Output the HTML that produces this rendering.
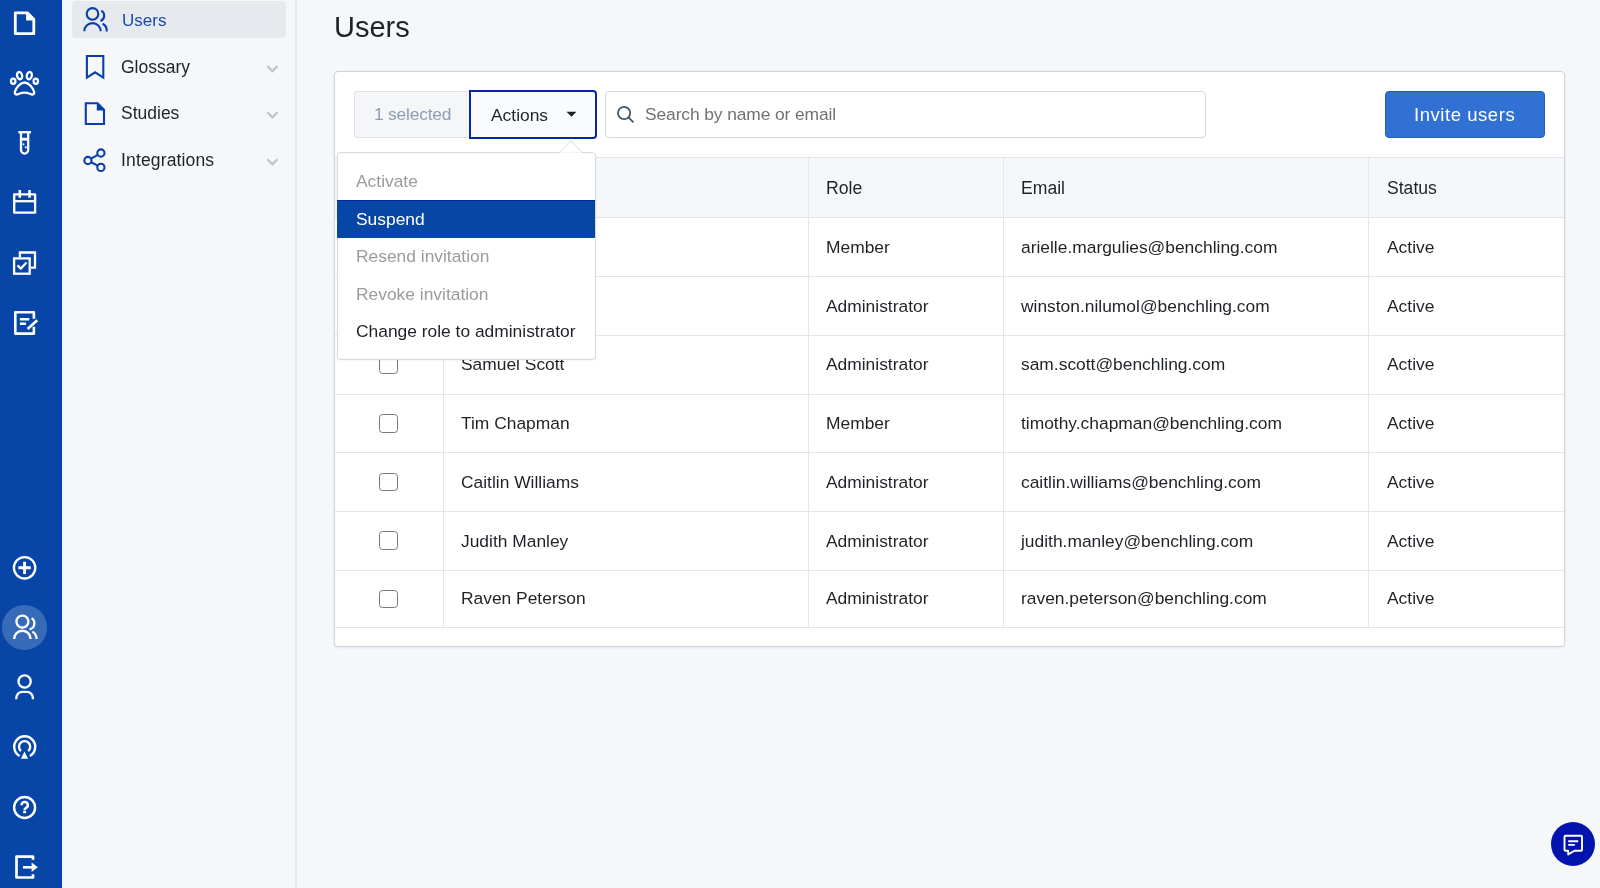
<!DOCTYPE html>
<html><head><meta charset="utf-8"><style>
*{box-sizing:border-box;margin:0;padding:0}
html,body{width:1600px;height:888px;overflow:hidden;background:#f6f7f9;font-family:"Liberation Sans",sans-serif;color:#1f2226}
.a{position:absolute}
.t{position:absolute;white-space:nowrap;line-height:1;will-change:transform}
svg{position:absolute;overflow:visible}
</style></head><body>
<div class="a" style="left:0;top:0;width:62px;height:888px;background:#0746a6"></div>
<div class="a" style="left:61px;top:0;width:1px;height:888px;background:#0141a2"></div>
<div class="a" style="left:2.3px;top:605px;width:44.6px;height:44.6px;border-radius:50%;background:rgba(255,255,255,0.2)"></div>

<svg style="left:0;top:0" width="62" height="888" viewBox="0 0 62 888">
 <!-- doc -->
 <path d="M15.3 12.8 H27.3 L33.8 19.3 V33.7 H15.3 Z" fill="none" stroke="#fff" stroke-width="2.8" stroke-linejoin="round"/>
 <path d="M26.1 11.5 L35.1 20.5 H26.1 Z" fill="#fff"/>
 <!-- paw -->
 <g fill="none" stroke="#fff" stroke-width="2.3" stroke-width="2.1">
  <ellipse cx="19.6" cy="75.6" rx="2.5" ry="3.7" transform="rotate(-15 19.6 75.6)"/>
  <ellipse cx="29.3" cy="75.6" rx="2.5" ry="3.7" transform="rotate(15 29.3 75.6)"/>
  <ellipse cx="13.2" cy="81.3" rx="2.2" ry="2.6"/>
  <ellipse cx="35.8" cy="81.3" rx="2.2" ry="2.6"/>
  <path d="M24.5 82.5 C20 82.5 16 88 15 91.5 C14.2 94.5 16.5 95 18.5 94 C21 93 23 92.6 24.5 92.6 C26 92.6 28 93 30.5 94 C32.5 95 34.8 94.5 34 91.5 C33 88 29 82.5 24.5 82.5 Z"/>
 </g>
 <!-- test tube -->
 <g fill="none" stroke="#fff" stroke-width="2.3">
  <path d="M18.3 132.2 H31"/>
  <path d="M21 132.2 V150 A3.6 3.6 0 0 0 28.2 150 V132.2"/>
  <path d="M21 139.2 H28.2" stroke-width="2.8"/>
 </g>
 <circle cx="23.5" cy="144.2" r="1" fill="#fff"/>
 <circle cx="25.8" cy="147.3" r="1.1" fill="#fff"/>
 <!-- calendar -->
 <g fill="none" stroke="#fff" stroke-width="2.3">
  <rect x="14.2" y="194.3" width="20.9" height="18.4" stroke-linejoin="round"/>
  <path d="M14.2 201.2 H35.1"/>
  <path d="M19.8 190 V197.7 M29.5 190 V197.7" stroke-width="2.5"/>
 </g>
 <!-- checkbox stack -->
 <g fill="none" stroke="#fff" stroke-width="2.3">
  <path d="M19.9 257.3 V252.5 H35 V267.6 H30.7"/>
  <rect x="14.1" y="258.4" width="15.6" height="15.3"/>
  <path d="M17.5 265.3 L20.8 268.5 L26.5 262.5"/>
 </g>
 <!-- edit doc -->
 <g fill="none" stroke="#fff" stroke-width="2.3">
  <path d="M33.9 318.8 V312.3 H15.3 V333.6 H33.9 V326.7" stroke-width="2.6" stroke-linejoin="round"/>
  <path d="M19.9 319.2 H29.3 M19.9 323.8 H26" stroke-width="2.5"/>
  <path d="M27.6 328.9 L37.2 320.3" stroke-width="2.7"/>
 </g>
 <!-- plus circle -->
 <g fill="none" stroke="#fff" stroke-width="2.3">
  <circle cx="24.6" cy="567.8" r="10.7"/>
  <path d="M24.6 561.7 V574 M18.4 567.8 H30.8" stroke-width="2.9"/>
 </g>
 <!-- users (active) -->
 <g fill="none" stroke="#fff" stroke-width="2.3">
  <circle cx="22.4" cy="621.6" r="6"/>
  <path d="M14.1 639 A8.25 8.25 0 0 1 30.6 639"/>
  <path d="M31.6 618.1 A6.2 6.2 0 0 1 29.6 629.3"/>
  <path d="M32.4 631.6 A9 9 0 0 1 36.6 639"/>
 </g>
 <!-- person -->
 <g fill="none" stroke="#fff" stroke-width="2.3">
  <circle cx="24.6" cy="681.5" r="6.1"/>
  <path d="M16.3 699.2 V698 A6.2 6.2 0 0 1 22.5 691.8 H26.7 A6.2 6.2 0 0 1 32.9 698 V699.2"/>
 </g>
 <!-- airplay -->
 <g fill="none" stroke="#fff" stroke-width="2.3">
  <path d="M19.6 756 A10.5 10.5 0 1 1 29.8 756" stroke-width="2.4"/>
  <path d="M21 751 A5.6 5.6 0 1 1 28.2 751" stroke-width="2.4"/>
 </g>
 <path d="M24.5 751.6 L28.1 758.7 H20.9 Z" fill="#fff"/>
 <!-- help -->
 <g fill="none" stroke="#fff" stroke-width="2.3">
  <circle cx="24.6" cy="807.5" r="10.5" stroke-width="2.4"/>
  <path d="M21.6 805.2 A3.1 3.1 0 1 1 25.8 808 C24.9 808.5 24.6 808.9 24.6 810.2" stroke-width="2.5"/>
 </g>
 <rect x="23.2" y="810.9" width="2.9" height="2.3" fill="#fff"/>
 <!-- logout -->
 <g fill="none" stroke="#fff" stroke-width="2.3">
  <path d="M33 859.7 V856.6 H16.5 V877.5 H33 V874.2" stroke-width="2.7" stroke-linejoin="round"/>
  <path d="M23 867.3 H33" stroke-width="2.6"/>
 </g>
 <path d="M31.6 862.5 L37.8 867.3 L31.6 872.1 Z" fill="#fff"/>
</svg>
<div class="a" style="left:295px;top:0;width:2px;height:888px;background:#e4e7eb"></div>
<div class="a" style="left:72px;top:1px;width:214px;height:37px;background:#e6e9ed;border-radius:4px"></div>

<svg style="left:0;top:0" width="300" height="200" viewBox="0 0 300 200">
 <g fill="none" stroke="#0a3ea8" stroke-width="2.1">
  <circle cx="92.5" cy="13.9" r="5.8"/>
  <path d="M84.3 31.3 A8.2 8.2 0 0 1 100.7 31.3"/>
  <path d="M101.3 10.6 A5.8 5.8 0 0 1 100.5 21"/>
  <path d="M102.6 23.8 A7.5 7.5 0 0 1 106.6 31.5"/>
  <path d="M86.9 56 H103.3 V77.6 L95.1 72.3 L86.9 77.6 Z" stroke-linejoin="miter"/>
  <path d="M85.8 103.2 H97.5 L104 109.7 V124 H85.8 Z"/>
  <circle cx="87.9" cy="160.5" r="3.6"/>
  <circle cx="100.9" cy="153" r="3.6"/>
  <circle cx="100.9" cy="167.4" r="3.6"/>
  <path d="M91 158.7 L97.8 154.8 M91 162.3 L97.8 165.6"/>
 </g>
 <path d="M96.8 102.2 L105 110.4 H96.8 Z" fill="#0a3ea8"/>
 <g fill="none" stroke="#bcc5ce" stroke-width="2.3">
  <path d="M267.4 66 L272.4 71.2 L277.4 66"/>
  <path d="M267.4 112.2 L272.4 117.4 L277.4 112.2"/>
  <path d="M267.4 159.2 L272.4 164.4 L277.4 159.2"/>
 </g>
</svg>
<div class="t" style="left:121.50px;top:12.00px;font-size:17px;color:#1a4aa8;">Users</div>
<div class="t" style="left:121.40px;top:59.00px;font-size:17.5px;color:#1f2226;">Glossary</div>
<div class="t" style="left:121.40px;top:105.00px;font-size:17.5px;color:#1f2226;">Studies</div>
<div class="t" style="left:121.40px;top:152.00px;font-size:17.5px;color:#1f2226;letter-spacing:0.15px">Integrations</div>
<div class="t" style="left:334.20px;top:13.00px;font-size:29px;color:#1f2226;">Users</div>
<div class="a" style="left:334px;top:71px;width:1231px;height:576px;background:#fff;border:1px solid #cdd3db;border-radius:4px;box-shadow:0 1px 3px rgba(30,40,60,0.08)"></div>
<div class="a" style="left:335px;top:157px;width:1229px;height:61px;background:#f6f7f9;border-top:1px solid #e1e4e8;border-bottom:1px solid #e1e4e8"></div>
<div class="a" style="left:335px;top:276px;width:1229px;height:1px;background:#e3e6ea"></div>
<div class="a" style="left:335px;top:335px;width:1229px;height:1px;background:#e3e6ea"></div>
<div class="a" style="left:335px;top:394px;width:1229px;height:1px;background:#e3e6ea"></div>
<div class="a" style="left:335px;top:452px;width:1229px;height:1px;background:#e3e6ea"></div>
<div class="a" style="left:335px;top:511px;width:1229px;height:1px;background:#e3e6ea"></div>
<div class="a" style="left:335px;top:570px;width:1229px;height:1px;background:#e3e6ea"></div>
<div class="a" style="left:335px;top:627px;width:1229px;height:1px;background:#e3e6ea"></div>
<div class="a" style="left:442.8px;top:157px;width:1px;height:470px;background:#e3e6ea"></div>
<div class="a" style="left:808.3px;top:157px;width:1px;height:470px;background:#e3e6ea"></div>
<div class="a" style="left:1003.0px;top:157px;width:1px;height:470px;background:#e3e6ea"></div>
<div class="a" style="left:1368.3px;top:157px;width:1px;height:470px;background:#e3e6ea"></div>
<div class="t" style="left:826.00px;top:180.00px;font-size:17.6px;color:#1f2226;">Role</div>
<div class="t" style="left:1020.80px;top:180.00px;font-size:17.6px;color:#1f2226;">Email</div>
<div class="t" style="left:1386.80px;top:180.00px;font-size:17.6px;color:#1f2226;">Status</div>
<div class="t" style="left:460.80px;top:180.00px;font-size:17.6px;color:#1f2226;">Name</div>
<div class="a" style="left:379.4px;top:238.38px;width:18.6px;height:18.6px;border:1.4px solid #787878;border-radius:3.5px;background:#fff"></div>
<div class="t" style="left:460.80px;top:239.00px;font-size:17.4px;color:#1f2226;">Arielle Margulies</div>
<div class="t" style="left:826.00px;top:239.00px;font-size:17.4px;color:#1f2226;">Member</div>
<div class="t" style="left:1021.00px;top:239.00px;font-size:17.4px;color:#1f2226;">arielle.margulies@benchling.com</div>
<div class="t" style="left:1386.80px;top:239.00px;font-size:17.4px;color:#1f2226;">Active</div>
<div class="a" style="left:379.4px;top:296.95px;width:18.6px;height:18.6px;border:1.4px solid #787878;border-radius:3.5px;background:#fff"></div>
<div class="t" style="left:460.80px;top:298.00px;font-size:17.4px;color:#1f2226;">Winston Nilumol</div>
<div class="t" style="left:826.00px;top:298.00px;font-size:17.4px;color:#1f2226;">Administrator</div>
<div class="t" style="left:1021.00px;top:298.00px;font-size:17.4px;color:#1f2226;">winston.nilumol@benchling.com</div>
<div class="t" style="left:1386.80px;top:298.00px;font-size:17.4px;color:#1f2226;">Active</div>
<div class="a" style="left:379.4px;top:355.52px;width:18.6px;height:18.6px;border:1.4px solid #787878;border-radius:3.5px;background:#fff"></div>
<div class="t" style="left:460.80px;top:356.00px;font-size:17.4px;color:#1f2226;">Samuel Scott</div>
<div class="t" style="left:826.00px;top:356.00px;font-size:17.4px;color:#1f2226;">Administrator</div>
<div class="t" style="left:1021.00px;top:356.00px;font-size:17.4px;color:#1f2226;">sam.scott@benchling.com</div>
<div class="t" style="left:1386.80px;top:356.00px;font-size:17.4px;color:#1f2226;">Active</div>
<div class="a" style="left:379.4px;top:414.09px;width:18.6px;height:18.6px;border:1.4px solid #787878;border-radius:3.5px;background:#fff"></div>
<div class="t" style="left:460.80px;top:415.00px;font-size:17.4px;color:#1f2226;">Tim Chapman</div>
<div class="t" style="left:826.00px;top:415.00px;font-size:17.4px;color:#1f2226;">Member</div>
<div class="t" style="left:1021.00px;top:415.00px;font-size:17.4px;color:#1f2226;">timothy.chapman@benchling.com</div>
<div class="t" style="left:1386.80px;top:415.00px;font-size:17.4px;color:#1f2226;">Active</div>
<div class="a" style="left:379.4px;top:472.66px;width:18.6px;height:18.6px;border:1.4px solid #787878;border-radius:3.5px;background:#fff"></div>
<div class="t" style="left:460.80px;top:474.00px;font-size:17.4px;color:#1f2226;">Caitlin Williams</div>
<div class="t" style="left:826.00px;top:474.00px;font-size:17.4px;color:#1f2226;">Administrator</div>
<div class="t" style="left:1021.00px;top:474.00px;font-size:17.4px;color:#1f2226;">caitlin.williams@benchling.com</div>
<div class="t" style="left:1386.80px;top:474.00px;font-size:17.4px;color:#1f2226;">Active</div>
<div class="a" style="left:379.4px;top:531.24px;width:18.6px;height:18.6px;border:1.4px solid #787878;border-radius:3.5px;background:#fff"></div>
<div class="t" style="left:460.80px;top:533.00px;font-size:17.4px;color:#1f2226;">Judith Manley</div>
<div class="t" style="left:826.00px;top:533.00px;font-size:17.4px;color:#1f2226;">Administrator</div>
<div class="t" style="left:1021.00px;top:533.00px;font-size:17.4px;color:#1f2226;">judith.manley@benchling.com</div>
<div class="t" style="left:1386.80px;top:533.00px;font-size:17.4px;color:#1f2226;">Active</div>
<div class="a" style="left:379.4px;top:589.80px;width:18.6px;height:18.6px;border:1.4px solid #787878;border-radius:3.5px;background:#fff"></div>
<div class="t" style="left:460.80px;top:590.00px;font-size:17.4px;color:#1f2226;">Raven Peterson</div>
<div class="t" style="left:826.00px;top:590.00px;font-size:17.4px;color:#1f2226;">Administrator</div>
<div class="t" style="left:1021.00px;top:590.00px;font-size:17.4px;color:#1f2226;">raven.peterson@benchling.com</div>
<div class="t" style="left:1386.80px;top:590.00px;font-size:17.4px;color:#1f2226;">Active</div>
<div class="a" style="left:354px;top:91px;width:116px;height:47px;background:#f5f6f8;border:1px solid #dde1e6;border-right:none;border-radius:3px 0 0 3px"></div>
<div class="t" style="left:374.00px;top:106.00px;font-size:17.4px;color:#8e9eb0;letter-spacing:-0.2px">1 selected</div>
<div class="a" style="left:469px;top:90px;width:128px;height:49px;background:#fafbfc;border:2px solid #0a25a6;border-radius:0 4px 4px 0"></div>
<div class="t" style="left:491.00px;top:107.00px;font-size:17.4px;color:#1f2226;">Actions</div>
<svg style="left:0;top:0" width="600" height="200"><path d="M566.5 111.8 H576.5 L571.5 116.8 Z" fill="#1f2226"/></svg>
<div class="a" style="left:605px;top:91px;width:600.5px;height:46.5px;background:#fff;border:1px solid #d3d8de;border-radius:4px"></div>
<svg style="left:0;top:0" width="700" height="200"><g fill="none" stroke="#3f5870" stroke-width="1.8"><circle cx="624.1" cy="113" r="6.1"/><path d="M628.5 117.4 L633.4 122.3"/></g></svg>
<div class="t" style="left:644.80px;top:106.00px;font-size:17.4px;color:#707174;letter-spacing:-0.1px">Search by name or email</div>
<div class="a" style="left:1384.5px;top:91px;width:160.5px;height:46.5px;background:#3171d3;border:1px solid #1f5ec8;border-radius:4px"></div>
<div class="t" style="left:1414.00px;top:106.00px;font-size:18.5px;color:#fff;letter-spacing:0.55px">Invite users</div>
<div class="a" style="left:336.5px;top:152px;width:259px;height:208px;background:#fff;border:1px solid #d3d9e0;border-radius:4px;box-shadow:0 1px 2px rgba(30,40,60,0.05)"></div>
<svg style="left:0;top:0" width="700" height="200"><path d="M559 152.8 L570.8 140.8 L582.6 152.8" fill="#fff" stroke="#d5dae0" stroke-width="1"/></svg>
<div class="a" style="left:337px;top:200px;width:258px;height:38px;background:#0746a6;border-top:1px solid #0522a0"></div>
<div class="t" style="left:356.40px;top:173.00px;font-size:17.4px;color:#9b9b9b;">Activate</div>
<div class="t" style="left:356.40px;top:211.00px;font-size:17.4px;color:#fff;">Suspend</div>
<div class="t" style="left:356.40px;top:248.00px;font-size:17.4px;color:#9b9b9b;">Resend invitation</div>
<div class="t" style="left:356.40px;top:286.00px;font-size:17.4px;color:#9b9b9b;">Revoke invitation</div>
<div class="t" style="left:356.40px;top:323.00px;font-size:17.4px;color:#1f2226;">Change role to administrator</div>
<div class="a" style="left:1551px;top:821.6px;width:44.2px;height:44.2px;border-radius:50%;background:#0313ae"></div>
<svg style="left:0;top:0" width="1600" height="888"><g fill="none" stroke="#fff" stroke-width="1.9" stroke-linejoin="round"><path d="M1565.5 835.8 H1581 A1 1 0 0 1 1582 836.8 V849.8 A1 1 0 0 1 1581 850.8 H1574.5 L1568.2 854.4 V850.8 H1565.5 A1 1 0 0 1 1564.5 849.8 V836.8 A1 1 0 0 1 1565.5 835.8 Z"/><path d="M1568.2 841.2 H1578.2 M1568.2 844.9 H1574.8"/></g></svg>
</body></html>
